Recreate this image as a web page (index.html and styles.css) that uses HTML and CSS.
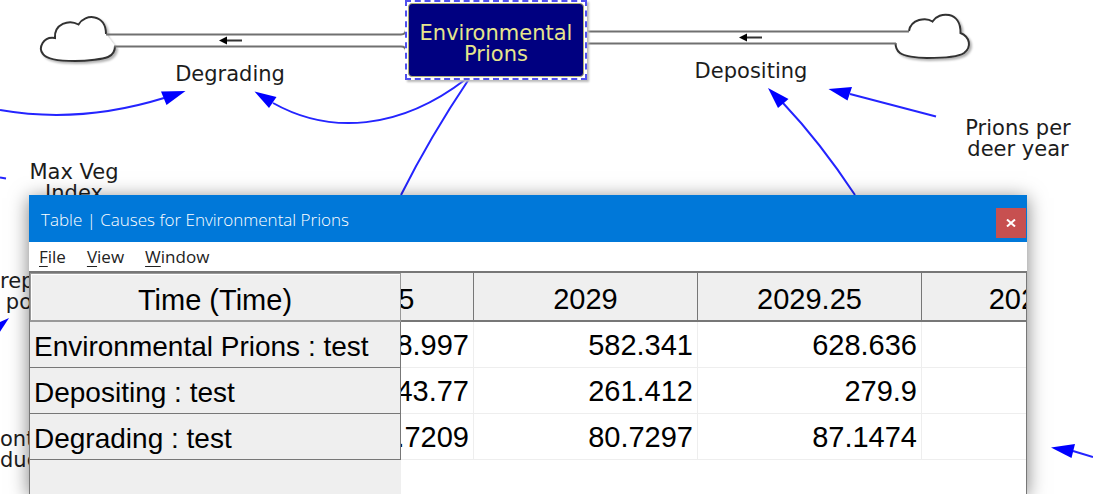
FILE: index.html
```html
<!DOCTYPE html>
<html lang="en">
<head>
<meta charset="utf-8">
<title>Causes for Environmental Prions</title>
<link rel="stylesheet" href="styles.css">
</head>
<body>
<main class="canvas">
  <svg class="links" width="1093" height="494" viewBox="0 0 1093 494" aria-hidden="true">
    <defs>
      <filter id="soft" x="-20%" y="-20%" width="150%" height="150%">
        <feDropShadow dx="2" dy="2" stdDeviation="1" flood-color="#000" flood-opacity=".3"/>
      </filter>
    </defs>
    <g class="cloud" filter="url(#soft)">
      <path d="M106 34C106 14 85 13 78.500 24.500C69 19 54 24 55 38C43 36 38 48 43 54C47 60 62 61 75 61C88 61 103 59 108 57C113 55 115 51 115 46"/>
      <path d="M909 31C911 19 926 17 932.500 21.500C939 11 961 11 960.500 33C970 37 972 47 964 53C957 58 935 58 927 58C916 58 904 56 900 53C896 50 895.500 47 895.500 43"/>
    </g>
    <g class="pipe">
      <path d="M106 34.500H401Q406 34.500 406 29"/>
      <path d="M114 46.500H401Q406 46.500 406 51"/>
      <path d="M909 31.500H589Q585 31.500 585 26"/>
      <path d="M896 43.500H589Q585 43.500 585 48"/>
    </g>
    <g class="flow">
      <path class="shaft" d="M227 40.500H242M746 37.500H762"/>
      <path d="M219 40.500L227 36.500V44.500ZM739 37.500L747 33.500V41.500Z"/>
    </g>
    <g class="cause">
      <path d="M0 110Q80 124 164 98"/>
      <path d="M273 103C330 135 400 130 466 79"/>
      <path d="M469 79Q430 137 401 195"/>
      <path d="M783 103Q820 142 855 195"/>
      <path d="M850 94L936 116.500"/>
      <path d="M1073 451L1093 457"/>
      <path d="M0 177.500L6 178.500"/>
    </g>
    <g class="head">
      <path d="M185.500 91L161 91.500L166.500 105Z"/>
      <path d="M254.500 91.500L276.500 97L269 108Z"/>
      <path d="M768 88L788.500 99L778 108Z"/>
      <path d="M828.500 89L852 87L847.500 100.500Z"/>
      <path d="M1051 447.500L1075 444L1071.500 458Z"/>
      <path d="M9 318L-14 328L-4 338Z"/>
    </g>
  </svg>

  <div class="label degrading">Degrading</div>
  <div class="label depositing">Depositing</div>
  <div class="label per-year">Prions per<br>deer year</div>
  <div class="label max-veg">Max Veg<br>Index</div>
  <div class="label edge edge-upper">rep<br>po</div>
  <div class="label edge edge-lower">ont<br>duc</div>
  <div class="stock"><div class="stock-body">Environmental<br>Prions</div></div>

  <section class="window" aria-label="Table">
    <header class="titlebar">
      <h1 class="title">Table | Causes for Environmental Prions</h1>
      <button class="close" type="button" aria-label="Close">
        <svg width="10" height="8" viewBox="0 0 10 8" aria-hidden="true"><path d="M1 .5L9 7.500M9 .5L1 7.500"/></svg>
      </button>
    </header>
    <nav class="menu">
      <button type="button"><u>F</u>ile</button>
      <button type="button"><u>V</u>iew</button>
      <button type="button"><u>W</u>indow</button>
    </nav>
    <div class="sheet">
      <table class="grid">
        <colgroup><col class="col-name"><col class="col-cut"><col class="col-value"><col class="col-value"><col></colgroup>
        <thead>
          <tr>
            <th class="corner" scope="col">Time (Time)</th>
            <th scope="col"><div class="clip from-end"><span class="full">2028.75</span></div></th>
            <th scope="col">2029</th>
            <th scope="col">2029.25</th>
            <th scope="col"><div class="clip"><span class="full">2029.5</span></div></th>
          </tr>
        </thead>
        <tbody>
          <tr><th scope="row">Environmental Prions : test</th><td><div class="clip from-end"><span>8.997</span></div></td><td>582.341</td><td>628.636</td><td></td></tr>
          <tr><th scope="row">Depositing : test</th><td><div class="clip from-end"><span>43.77</span></div></td><td>261.412</td><td>279.9</td><td></td></tr>
          <tr><th scope="row">Degrading : test</th><td><div class="clip from-end"><span>.7209</span></div></td><td>80.7297</td><td>87.1474</td><td></td></tr>
        </tbody>
      </table>
      <div class="gutter"></div>
    </div>
  </section>
</main>
</body>
</html>
```
FILE: styles.css
```css
* {
  box-sizing: border-box;
}

body {
  margin: 0;
  background: #fff;
}

.canvas {
  position: relative;
  height: 100vh;
  overflow: hidden;
  font: 21px/21px "DejaVu Sans", Verdana, sans-serif;
  color: #1c1c1c;
}

.links {
  position: absolute;
  top: 0;
  left: 0;
}

.cloud path {
  fill: #fff;
  stroke: #333;
  stroke-width: 2;
}

.pipe path {
  fill: none;
  stroke: #707070;
  stroke-width: 2;
}

.flow .shaft {
  stroke: #333;
  stroke-width: 2;
}

.cause path {
  fill: none;
  stroke: #2424ff;
  stroke-width: 2;
}

.head path {
  fill: #00f;
}

.label {
  position: absolute;
  text-align: center;
  white-space: nowrap;
  transform: translateX(-50%);
}

.degrading { left: 230px; top: 64px; }
.depositing { left: 751px; top: 61px; }
.per-year { left: 1018px; top: 118px; }
.max-veg { left: 74px; top: 162px; }

.edge {
  left: 0;
  width: 32px;
  text-align: right;
  transform: none;
}

.edge-upper { top: 271px; }
.edge-lower { top: 429px; }

.stock {
  position: absolute;
  left: 405px;
  top: 0;
  padding: 1px;
  width: 182px;
  border: 2px dashed #5050ee;
  background: #fff;
  box-shadow: 2px 2px 2px #bbb;
}

.stock-body {
  padding: 19px 0 11px;
  border: 1px solid #b0b070;
  border-radius: 4px;
  background: #000080;
  color: #e6e68c;
  text-align: center;
}

.window {
  position: absolute;
  top: 195px;
  right: 66px;
  bottom: 0;
  left: 29px;
  display: flex;
  flex-direction: column;
  background: #fff;
  box-shadow: 0 3px 18px rgba(0, 0, 0, .5);
  font-family: "Open Sans", "Segoe UI", sans-serif;
}

.titlebar {
  display: flex;
  align-items: center;
  justify-content: space-between;
  height: 47px;
  padding: 8px 1px 0 12px;
  background: #0078d9;
}

.title {
  margin: 0;
  padding-bottom: 6px;
  font-size: 17px;
  font-weight: 300;
  line-height: 24px;
  color: #fff;
}

.close {
  display: grid;
  place-items: center;
  width: 30px;
  height: 30px;
  padding: 0;
  border: 0;
  background: #c75050;
}

.close path {
  stroke: #fff;
  stroke-width: 2;
}

.menu {
  display: flex;
  gap: 21px;
  height: 29px;
  padding: 3px 10px;
}

.menu button {
  padding: 0;
  border: 0;
  background: none;
  font: 17px/24px "Open Sans", "Segoe UI", sans-serif;
  color: #222;
}

.menu u {
  text-underline-offset: 3px;
}

.sheet {
  flex: 1;
  display: flex;
  flex-direction: column;
  min-height: 0;
  border: 1px solid #777;
  border-top: 2px solid #777;
  border-bottom: 0;
  overflow: hidden;
}

.grid {
  width: 100%;
  table-layout: fixed;
  border-collapse: separate;
  border-spacing: 0;
  font: 29px/32px "Liberation Sans", Arial, sans-serif;
  color: #000;
}

.col-name { width: 371px; }
.col-cut { width: 73px; }
.col-value { width: 224px; }

.grid th,
.grid td {
  height: 46px;
  padding: 0 4px;
  overflow: hidden;
  white-space: nowrap;
  font-weight: 400;
}

.grid td {
  border-right: 1px solid #eee;
  border-bottom: 1px solid #eee;
  text-align: right;
}

.grid th {
  border-right: 1px solid #777;
  border-bottom: 1px solid #777;
  background: #efefef;
}

.grid tbody th {
  padding-top: 4px;
  text-align: left;
  font-size: 28px;
}

.grid thead th {
  height: 49px;
  padding-top: 4px;
  border-bottom-width: 2px;
}

.grid thead .corner {
  padding-top: 6px;
  border-color: #999;
  box-shadow: inset 1px 1px #999, inset 2px 2px #fff;
}

.clip {
  display: flex;
}

.clip.from-end {
  justify-content: flex-end;
}

.grid thead .clip {
  margin: 0 -4px;
}

.full {
  flex: none;
  width: 222px;
  text-align: center;
}

.grid tr > :last-child {
  border-right: 0;
}

.gutter {
  flex: 1;
  width: 371px;
  background: #efefef;
}
```
